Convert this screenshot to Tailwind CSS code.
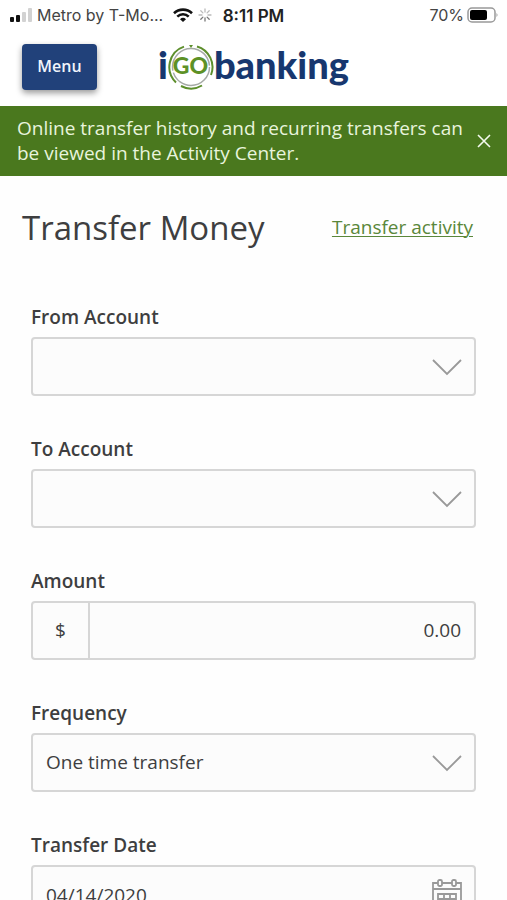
<!DOCTYPE html>
<html lang="en">
<head>
<meta charset="utf-8">
<meta name="viewport" content="width=device-width, initial-scale=1">
<title>Transfer Money</title>
<script src="https://cdn.jsdelivr.net/npm/@tailwindcss/browser@4"></script>
</head>
<body class="bg-[#fefefe] font-['Open_Sans','Noto_Sans',sans-serif] text-[#3e3e40]">
<div class="grid h-[30px] grid-cols-[1fr_auto_1fr] items-center bg-white px-[9px] font-['Inter',sans-serif] text-base text-[#444]">
  <div class="flex items-center gap-[5px] whitespace-nowrap">
    <svg class="h-[14px] w-[23px]" viewBox="0 0 23 14" aria-hidden="true">
      <rect x="1" y="9" width="4" height="5" rx="1" fill="#111"/><rect x="7" y="7" width="4" height="7" rx="1" fill="#111"/>
      <rect x="13" y="4" width="4" height="10" rx="1" fill="#d2d2d2"/><rect x="19" y="0" width="4" height="14" rx="1" fill="#d2d2d2"/>
    </svg>
    <span>Metro by T-Mo...</span>
    <svg class="ml-[5px] h-[14px] w-[20px] shrink-0" viewBox="0 0 20 14" fill="none" stroke="#111" stroke-width="2.6" aria-hidden="true">
      <path d="M1 5.2a13 13 0 0 1 18 0M4.300 8.600a8.200 8.200 0 0 1 11.400 0"/><path d="M7 11.200a4.400 4.400 0 0 1 6 0L10 14z" fill="#111" stroke="none"/>
    </svg>
    <svg class="h-[14px] w-[14px] shrink-0" viewBox="0 0 14 14" fill="none" stroke-width="1.300" stroke-linecap="round" aria-hidden="true">
      <path stroke="#bbb" d="M7 1v3M11.200 2.800 9.100 4.900M13 7h-3M2.800 2.800l2.100 2.100M1 7h3"/><path stroke="#777" d="M11.200 11.200 9.100 9.100M7 13v-3M2.800 11.200l2.100-2.100"/>
    </svg>
  </div>
  <div class="pt-[2px] text-[17px] leading-6 font-semibold whitespace-nowrap text-[#222]">8:11 PM</div>
  <div class="flex items-center justify-end gap-[3px]">
    <span>70%</span>
    <svg class="h-[16px] w-[31px]" viewBox="0 0 31 16" aria-hidden="true">
      <rect x="1" y="1" width="27" height="14" rx="4" fill="none" stroke="#999" stroke-width="1.500"/><rect x="3" y="3" width="17" height="10" rx="2" fill="#000"/><path d="M29.500 6q2 2 0 4z" fill="#999"/>
    </svg>
  </div>
</div>
<header class="grid h-[76px] grid-cols-[1fr_auto_1fr] items-start bg-white px-[22px] pt-[14px]">
  <button type="button" class="h-[46px] w-[75px] rounded bg-[#21417a] pb-[2px] text-base font-semibold text-[#f0f4fa] shadow-[0_3px_6px_rgba(0,0,0,0.4)]">Menu</button>
  <a href="#" aria-label="iGObanking" class="flex h-[46px] items-center font-['Lato',sans-serif] text-[38px] leading-[42px] font-black text-[#17376f]">
    <span class="pb-[6px]">i</span>
    <svg class="h-[46px] w-[46px]" viewBox="0 0 46 46" fill="none" aria-hidden="true">
      <g stroke="#5d8f2c" stroke-width="2"><path d="M29 2.500A21.500 21.500 0 0 1 43 31M34 41.500A21.500 21.500 0 0 1 13 42M8 38.500A21.500 21.500 0 0 1 16 2.600"/></g>
      <circle cx="23" cy="23" r="18.500" stroke="#a6aaa6" stroke-width="1.500" stroke-dasharray="52 2 60 3"/>
      <path d="M21 1h4l-2 3z" fill="#5d8f2c"/>
      <text x="22.500" y="30" text-anchor="middle" fill="#5d9126" font-family="Lato, sans-serif" font-weight="900" font-size="23">GO</text>
    </svg>
    <span class="pb-[6px]">banking</span>
  </a>
  <span></span>
</header>
<div role="status" class="flex min-h-[70px] items-center justify-between gap-2 bg-[#4a781e] pr-[15px] pl-[17px] text-[19px] leading-[25px] text-[#e8f4dc]">
  <p>Online transfer history and recurring transfers can be viewed in the Activity Center.</p>
  <button type="button" aria-label="Dismiss" class="flex h-4 w-4 shrink-0 items-center justify-center">
    <svg class="h-[14px] w-[14px]" viewBox="0 0 14 14" stroke="#f4faee" stroke-width="1.600" aria-hidden="true"><path d="M1 1l12 12M13 1 1 13"/></svg>
  </button>
</div>
<main>
  <div class="flex h-[103px] items-center justify-between pr-[34px] pl-[22px]">
    <h1 class="text-[33px] leading-[44px]">Transfer Money</h1>
    <a href="#" class="pb-[2px] text-[19px] leading-6 text-[#5a873a] underline decoration-1 underline-offset-2">Transfer activity</a>
  </div>
  <form class="flex flex-col gap-[41px] px-[31px] pt-[26px] text-[19px]">
    <div class="flex flex-col gap-2">
      <label for="from" class="leading-6 font-semibold">From Account</label>
      <div class="relative">
        <select id="from" class="h-[59px] w-full appearance-none rounded border-2 border-[#d6d6d6] bg-[#fcfcfc] px-[13px]"><option></option></select>
        <svg class="pointer-events-none absolute top-[21px] right-[13px] h-[18px] w-8" viewBox="0 0 32 18" fill="none" stroke="#999" stroke-width="1.800" aria-hidden="true"><path d="M2 2l14 14L30 2"/></svg>
      </div>
    </div>
    <div class="flex flex-col gap-2">
      <label for="to" class="leading-6 font-semibold">To Account</label>
      <div class="relative">
        <select id="to" class="h-[59px] w-full appearance-none rounded border-2 border-[#d6d6d6] bg-[#fcfcfc] px-[13px]"><option></option></select>
        <svg class="pointer-events-none absolute top-[21px] right-[13px] h-[18px] w-8" viewBox="0 0 32 18" fill="none" stroke="#999" stroke-width="1.800" aria-hidden="true"><path d="M2 2l14 14L30 2"/></svg>
      </div>
    </div>
    <div class="flex flex-col gap-2">
      <label for="amount" class="leading-6 font-semibold">Amount</label>
      <div class="flex h-[59px] rounded border-2 border-[#d6d6d6] bg-[#fcfcfc]">
        <span class="flex w-[57px] shrink-0 items-center justify-center border-r-2 border-[#d6d6d6]">$</span>
        <input id="amount" type="text" inputmode="decimal" value="0.00" class="w-full min-w-0 px-[13px] text-right">
      </div>
    </div>
    <div class="flex flex-col gap-2">
      <label for="frequency" class="leading-6 font-semibold">Frequency</label>
      <div class="relative">
        <select id="frequency" class="h-[59px] w-full appearance-none rounded border-2 border-[#d6d6d6] bg-[#fcfcfc] px-[13px]"><option>One time transfer</option></select>
        <svg class="pointer-events-none absolute top-[21px] right-[13px] h-[18px] w-8" viewBox="0 0 32 18" fill="none" stroke="#999" stroke-width="1.800" aria-hidden="true"><path d="M2 2l14 14L30 2"/></svg>
      </div>
    </div>
    <div class="flex flex-col gap-2">
      <label for="date" class="leading-6 font-semibold">Transfer Date</label>
      <div class="relative">
        <input id="date" type="text" value="04/14/2020" class="h-[59px] w-full rounded border-2 border-[#d6d6d6] bg-[#fcfcfc] px-[13px]">
        <svg class="pointer-events-none absolute top-[14px] right-[13px] h-[30px] w-8" viewBox="0 0 32 30" fill="none" stroke="#999" stroke-width="1.800" aria-hidden="true">
          <path d="M7 4H2v25h28V4h-5M11 4h10M2 10h28"/><rect x="7" y="1" width="4" height="6" rx="1.500"/><rect x="21" y="1" width="4" height="6" rx="1.500"/><path d="M7 15h18v10H7zM7 20h18M13 15v10M19 15v10"/>
        </svg>
      </div>
    </div>
  </form>
</main>
</body>
</html>
